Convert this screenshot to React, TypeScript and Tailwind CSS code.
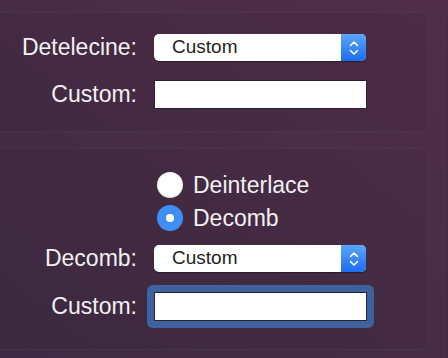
import React from "react";

const font = { fontFamily: '"Liberation Sans", Arial, sans-serif' };

function Stepper() {
  return (
    <div className="flex h-full w-[25px] items-center justify-center rounded-r-[5px] bg-gradient-to-b from-[#5aa6fa] to-[#1d6cf0]">
      <svg width="12" height="18" viewBox="0 0 12 18" fill="none">
        <path d="M2.5 6.5 L6 3 L9.5 6.5" stroke="white" strokeWidth="1.6" strokeLinecap="round" strokeLinejoin="round" />
        <path d="M2.5 11.5 L6 15 L9.5 11.5" stroke="white" strokeWidth="1.6" strokeLinecap="round" strokeLinejoin="round" />
      </svg>
    </div>
  );
}

function Select({ value }: { value: string }) {
  return (
    <div className="flex h-[27px] w-[212px] items-center rounded-[5px] bg-white shadow-[0_1px_1px_rgba(0,0,0,0.35)]">
      <span className="flex-1 pl-[18px] text-[19px] text-[#1e1e1e]">{value}</span>
      <Stepper />
    </div>
  );
}

function Field() {
  return <div className="h-[29px] w-[213px] border border-[#2b2230] bg-white" />;
}

function Label({ children }: { children: React.ReactNode }) {
  return <div className="text-right text-[23px] leading-none text-[#f3f0f3]">{children}</div>;
}

function Radio({ checked, label }: { checked?: boolean; label: string }) {
  return (
    <div className="flex h-[26px] items-center gap-[10px] pl-[3px]">
      {checked ? (
        <span className="flex h-[26px] w-[26px] items-center justify-center rounded-full bg-[#3e8ff5]">
          <span className="h-[8px] w-[8px] rounded-full bg-white" />
        </span>
      ) : (
        <span className="h-[26px] w-[26px] rounded-full bg-white shadow-[inset_0_-1px_2px_rgba(0,0,0,0.15)]" />
      )}
      <span className="text-[23px] leading-none text-[#f3f0f3]">{label}</span>
    </div>
  );
}

export default function App() {
  return (
    <div
      style={font}
      className="flex h-[358px] w-[448px] gap-[16px] overflow-hidden bg-gradient-to-bl from-[#502d49] via-[#472c45] to-[#3e2b43] pt-[12px]"
    >
      <div className="flex w-[428px] shrink-0 flex-col gap-[16px]">
        {/* DETELECINE */}
        <div className="h-[120px] rounded-r-[7px] border border-l-0 border-white/[0.045] bg-black/[0.04] pt-[21px]">
          <div className="grid grid-cols-[137px_auto] items-center gap-x-[17px] gap-y-[19px]">
            <Label>Detelecine:</Label>
            <Select value="Custom" />
            <Label>Custom:</Label>
            <Field />
          </div>
        </div>

        {/* DEINTERLACE / DECOMB */}
        <div className="h-[202px] rounded-r-[7px] border border-l-0 border-white/[0.045] bg-black/[0.04] pt-[23px]">
          <div className="grid grid-cols-[137px_auto] items-center gap-x-[17px]">
            <div />
            <div className="flex flex-col gap-[7px]">
              <Radio label="Deinterlace" />
              <Radio checked label="Decomb" />
            </div>
            <Label>
              <span className="mt-[14px] block">Decomb:</span>
            </Label>
            <div className="mt-[14px]">
              <Select value="Custom" />
            </div>
            <Label>
              <span className="mt-[20px] block">Custom:</span>
            </Label>
            <div className="mt-[20px]">
              <div className="-m-[7px] w-fit rounded-[6px] bg-[#3f629e] p-[7px]">
                <Field />
              </div>
            </div>
          </div>
        </div>
      </div>

      <div className="mt-[3px] h-[400px] flex-1 rounded-tl-[7px] border border-r-0 border-white/[0.045] bg-black/[0.04]" />
    </div>
  );
}
